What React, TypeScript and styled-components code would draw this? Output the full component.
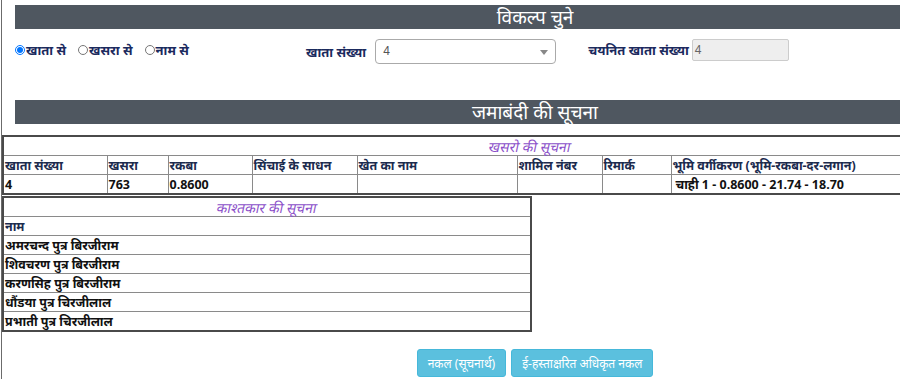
import React from "react";
import styled, { createGlobalStyle } from "styled-components";

const GlobalStyle = createGlobalStyle`
  body {
    margin: 0;
    background: #ffffff;
    overflow: hidden;
    font-family: "Noto Sans", "Liberation Sans", Arial, sans-serif;
  }
`;

const Page = styled.div`
  margin-left: 1px;
  border-left: 1px solid #6b6b6b;
  height: 379px;
  overflow: hidden;
`;

const Inner = styled.div`
  width: 1066px;
  padding-top: 5px;
`;

const SectionBar = styled.div<{ $top?: number }>`
  margin: ${(p) => p.$top ?? 0}px 13px 0 13px;
  height: 24px;
  background: #4f5760;
  color: #ffffff;
  text-align: center;
  font-size: 19px;
  line-height: 24px;
`;

const OptionsRow = styled.div`
  display: flex;
  align-items: flex-start;
  height: 48px;
  margin-top: 10px;
  padding-left: 13px;
`;

const RadioGroup = styled.div`
  display: flex;
  gap: 12px;
  width: 291px;
  margin-top: 2px;
`;

const RadioLabel = styled.label`
  display: flex;
  align-items: center;
  color: #1b2a5e;
  font-weight: bold;
  font-size: 13px;
`;

const Radio = styled.input`
  margin: 0 1px 0 0;
  width: 10px;
  height: 10px;
`;

const FieldLabel = styled.span<{ $gap?: number }>`
  color: #1b2a5e;
  font-weight: bold;
  font-size: 13px;
  margin-right: ${(p) => p.$gap ?? 3}px;
`;

const Field = styled.div<{ $gap?: number }>`
  display: flex;
  align-items: center;
  margin-right: ${(p) => p.$gap ?? 0}px;
`;

const SelectBox = styled.div`
  position: relative;
  width: 181px;
  height: 25px;
  border: 1px solid #aaaaaa;
  border-radius: 4px;
  box-sizing: border-box;
  font-size: 12px;
  color: #555;
  line-height: 23px;
  padding-left: 7px;
  font-family: "Liberation Sans", Arial, sans-serif;

  &::after {
    content: "";
    position: absolute;
    right: 7px;
    top: 10px;
    border-left: 4px solid transparent;
    border-right: 4px solid transparent;
    border-top: 5px solid #888;
  }
`;

const ReadOnly = styled.div`
  width: 97px;
  height: 22px;
  box-sizing: border-box;
  background: #eeeeee;
  border: 1px solid #cccccc;
  border-radius: 2px;
  font-size: 12px;
  color: #666;
  line-height: 20px;
  padding-left: 2px;
  font-family: "Liberation Sans", Arial, sans-serif;
`;

const Table = styled.table<{ $width: number; $top?: number }>`
  width: ${(p) => p.$width}px;
  margin-top: ${(p) => p.$top ?? 0}px;
  border-collapse: collapse;
  border: 2px solid #4a4a4a;
  font-size: 12.5px;
  font-family: "Noto Sans", "Liberation Sans", Arial, sans-serif;
  table-layout: fixed;
`;

const Col = styled.col<{ $w?: number }>`
  width: ${(p) => (p.$w ? `${p.$w}px` : "auto")};
`;

const Caption = styled.td`
  height: 18px;
  padding: 0;
  text-align: center;
  color: #8b4fc9;
  font-size: 14px;
  border: 1px solid #8a8a8a;
  line-height: 17px;
`;

const Slanted = styled.span`
  display: inline-block;
  transform: skewX(-12deg);
`;

const Head = styled.th`
  height: 18px;
  padding: 0 0 0 1px;
  text-align: left;
  color: #1c2b4e;
  font-weight: bold;
  border: 1px solid #8a8a8a;
  line-height: 17px;
  white-space: nowrap;
  overflow: hidden;
`;

const Cell = styled.td<{ $pad?: number }>`
  height: 18px;
  padding: 0 0 0 ${(p) => p.$pad ?? 1}px;
  font-weight: bold;
  color: #111;
  border: 1px solid #8a8a8a;
  line-height: 17px;
  white-space: nowrap;
`;

const Buttons = styled.div`
  display: flex;
  justify-content: center;
  gap: 5px;
  margin-top: 17px;
`;

const InfoButton = styled.button`
  height: 28px;
  padding: 0 10px;
  background: #5bc0de;
  border: 1px solid #46b8da;
  border-radius: 3px;
  color: #ffffff;
  font-size: 12px;
  font-family: "Noto Sans", "Liberation Sans", Arial, sans-serif;
`;

const khasraCols = [
  { label: "खाता संख्या", w: 104 },
  { label: "खसरा", w: 61 },
  { label: "रकबा", w: 84 },
  { label: "सिंचाई के साधन", w: 105 },
  { label: "खेत का नाम", w: 160 },
  { label: "शामिल नंबर", w: 85 },
  { label: "रिमार्क", w: 69 },
  { label: "भूमि वर्गीकरण (भूमि-रकबा-दर-लगान)", w: 0 },
];

const khasraRow = ["4", "763", "0.8600", "", "", "", "", "चाही 1 - 0.8600 - 21.74 - 18.70"];

const owners = [
  "अमरचन्द पुत्र बिरजीराम",
  "शिवचरण पुत्र बिरजीराम",
  "करणसिह पुत्र बिरजीराम",
  "धौंडया पुत्र चिरजीलाल",
  "प्रभाती पुत्र चिरजीलाल",
];

export default function App() {
  return (
    <Page>
      <GlobalStyle />
      <Inner>
        <SectionBar>विकल्प चुने</SectionBar>
        <OptionsRow>
          <RadioGroup>
            <RadioLabel>
              <Radio type="radio" name="opt" defaultChecked />
              खाता से
            </RadioLabel>
            <RadioLabel>
              <Radio type="radio" name="opt" />
              खसरा से
            </RadioLabel>
            <RadioLabel>
              <Radio type="radio" name="opt" />
              नाम से
            </RadioLabel>
          </RadioGroup>
          <Field $gap={32}>
            <FieldLabel $gap={9}>खाता संख्या</FieldLabel>
            <SelectBox>4</SelectBox>
          </Field>
          <Field>
            <FieldLabel>चयनित खाता संख्या</FieldLabel>
            <ReadOnly>4</ReadOnly>
          </Field>
        </OptionsRow>
        <SectionBar $top={13}>जमाबंदी की सूचना</SectionBar>
        <Table $width={1056} $top={11}>
          <colgroup>
            {khasraCols.map((c) => (
              <Col key={c.label} $w={c.w || undefined} />
            ))}
          </colgroup>
          <tbody>
            <tr>
              <Caption colSpan={8}>
                <Slanted>खसरो की सूचना</Slanted>
              </Caption>
            </tr>
            <tr>
              {khasraCols.map((c) => (
                <Head key={c.label}>{c.label}</Head>
              ))}
            </tr>
            <tr>
              {khasraRow.map((v, i) => (
                <Cell key={i} $pad={i === 7 ? 4 : 1}>
                  {v}
                </Cell>
              ))}
            </tr>
          </tbody>
        </Table>
        <Table $width={530} $top={1}>
          <tbody>
            <tr>
              <Caption>
                <Slanted>काश्तकार की सूचना</Slanted>
              </Caption>
            </tr>
            <tr>
              <Head>नाम</Head>
            </tr>
            {owners.map((o) => (
              <tr key={o}>
                <Cell>{o}</Cell>
              </tr>
            ))}
          </tbody>
        </Table>
        <Buttons>
          <InfoButton>नकल (सूचनार्थ)</InfoButton>
          <InfoButton>ई-हस्ताक्षरित अधिकृत नकल</InfoButton>
        </Buttons>
      </Inner>
    </Page>
  );
}
